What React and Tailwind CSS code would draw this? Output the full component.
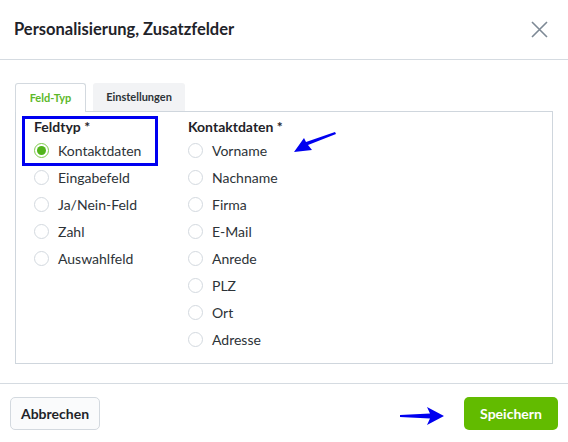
import React from 'react';

const feldtypen = ['Kontaktdaten', 'Eingabefeld', 'Ja/Nein-Feld', 'Zahl', 'Auswahlfeld'];
const kontaktdaten = ['Vorname', 'Nachname', 'Firma', 'E-Mail', 'Anrede', 'PLZ', 'Ort', 'Adresse'];

function Radio({ label, checked }) {
  return (
    <label className="flex items-center h-[27px] gap-[9px] text-[14px] text-[#2d3338]">
      {checked ? (
        <span className="w-[15px] h-[15px] rounded-full border border-[#7fcc4c] flex items-center justify-center">
          <span className="w-[9px] h-[9px] rounded-full bg-[#52b41c]" />
        </span>
      ) : (
        <span className="w-[15px] h-[15px] rounded-full border border-[#d3d9df] bg-white" />
      )}
      <span>{label}</span>
    </label>
  );
}

export default function App() {
  return (
    <div className="w-[568px] h-[442px] bg-white relative font-['Lato','Noto_Sans',sans-serif]">
      {/* Header */}
      <div className="h-[60px] flex items-center justify-between pl-[14px] pr-[20px] border-b border-[#d5dbe1]">
        <h2 className="text-[16.5px] font-bold text-[#1f2329]">Personalisierung, Zusatzfelder</h2>
        <button className="w-[18px] h-[18px] flex items-center justify-center">
          <svg width="17" height="17" viewBox="0 0 17 17" fill="none" stroke="#7d8995" strokeWidth="1.6">
            <path d="M1 1L16 16M16 1L1 16" />
          </svg>
        </button>
      </div>

      {/* Body */}
      <div className="px-[15px] pt-[23px] pb-[19px]">
        <div className="flex gap-[7px] items-end">
          <div className="relative z-10 -mb-px w-[71px] h-[29px] bg-white border border-b-0 border-[#d3d9df] rounded-t-[3px] flex items-center justify-center text-[11px] font-bold text-[#5cb82a]">
            Feld-Typ
          </div>
          <div className="w-[92px] h-[28px] bg-[#f2f3f5] rounded-t-[3px] flex items-center justify-center text-[11px] font-bold text-[#2d3338]">
            Einstellungen
          </div>
        </div>
        <div className="h-[253px] border border-[#cfd6dd] flex pl-[18px] pt-[5px]">
          <div className="w-[154px]">
            <div className="h-[20px] leading-[20px] text-[14px] font-bold text-[#1f2329]">Feldtyp *</div>
            {feldtypen.map((f, i) => (
              <Radio key={f} label={f} checked={i === 0} />
            ))}
          </div>
          <div>
            <div className="h-[20px] leading-[20px] text-[14px] font-bold text-[#1f2329]">Kontaktdaten *</div>
            {kontaktdaten.map((f) => (
              <Radio key={f} label={f} />
            ))}
          </div>
        </div>
      </div>

      {/* Footer */}
      <div className="border-t border-[#d5dbe1] flex items-center justify-between px-[10px] pt-[13px]">
        <button className="h-[33px] w-[90px] border border-[#d3d9df] rounded-[5px] bg-[#fafbfc] text-[14px] font-bold text-[#1f2329]">
          Abbrechen
        </button>
        <button className="h-[33px] w-[94px] rounded-[5px] bg-[#62bb00] text-[14px] font-bold text-white">
          Speichern
        </button>
      </div>

      {/* Annotations */}
      <div className="absolute left-[22px] top-[116px] w-[136px] h-[50px] border-[3px] border-[#0000f0] pointer-events-none" />
      <svg className="absolute left-[290px] top-[128px]" width="52" height="28" viewBox="0 0 52 28">
        <path d="M46 6 L18 17 L22 22 L4 24 L14 10 L16 14 L45 4 Z" fill="#0000f0" />
      </svg>
      <svg className="absolute left-[398px] top-[405px]" width="50" height="22" viewBox="0 0 50 22">
        <path d="M2 10 L32 8.5 L29 2 L46 11 L29 20 L32 13.5 L2 12 Z" fill="#0000f0" />
      </svg>
    </div>
  );
}
